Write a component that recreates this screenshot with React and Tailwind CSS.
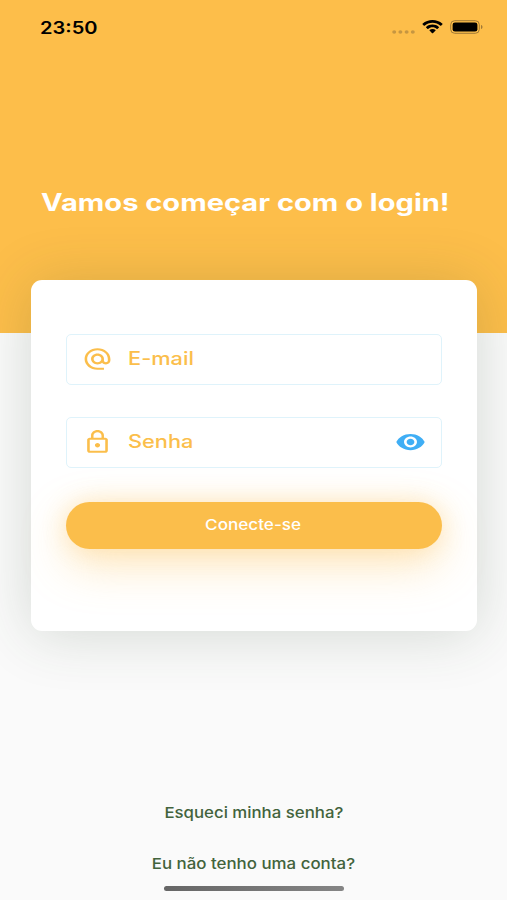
import React from "react";
import { MdAlternateEmail, MdLockOutline, MdRemoveRedEye } from "react-icons/md";

function StatusBar() {
  return (
    <div className="flex h-[54px] items-center justify-between pl-[40px] pr-[24px]">
      <span className="mt-[2px] origin-left scale-x-[1.18] text-[17px] font-semibold leading-none text-black">
        23:50
      </span>
      <div className="flex items-center">
        <svg className="mt-[9px] mr-[7px] h-1 w-[23px]" viewBox="0 0 23 4" fill="#c69641">
          <ellipse cx="2.2" cy="2" rx="2" ry="1.7" />
          <ellipse cx="8.4" cy="2" rx="2" ry="1.7" />
          <ellipse cx="14.6" cy="2" rx="2" ry="1.7" />
          <ellipse cx="20.8" cy="2" rx="2" ry="1.7" />
        </svg>
        <svg
          className="mr-[7px] h-[14px] w-[21px]"
          viewBox="0 0 17 12"
          preserveAspectRatio="none"
          fill="#000"
        >
          <path d="M8.5 2.4c2.4 0 4.7.9 6.4 2.5.1.1.3.1.5 0l1.2-1.2c.1-.2.1-.4 0-.5C12.1-1 4.9-1 .4 3.2c-.1.1-.1.3 0 .5l1.2 1.2c.2.1.4.1.5 0C3.8 3.3 6.1 2.4 8.5 2.4z" />
          <path d="M8.5 6.3c1.3 0 2.6.5 3.5 1.4.2.1.4.1.5 0l1.2-1.3c.2-.1.2-.4 0-.5-2.9-2.7-7.5-2.7-10.4 0-.2.1-.2.4 0 .5l1.2 1.3c.1.1.3.1.5 0 .9-.9 2.2-1.4 3.5-1.4z" />
          <path d="M11 9.1c.1-.1.1-.4 0-.5-1.4-1.2-3.5-1.2-4.9 0-.2.1-.2.4 0 .5l2.1 2.2c.2.1.4.1.6 0z" />
        </svg>
        <svg className="h-[14px] w-[33px]" viewBox="0 0 33 14" fill="none">
          <rect x="0.7" y="0.7" width="28.6" height="12.6" rx="4" stroke="#a17a36" strokeWidth="1" />
          <rect x="2.6" y="2.4" width="24.8" height="9.2" rx="2.4" fill="#000" />
          <path d="M31 5v4c1-.4 1.5-1.2 1.5-2s-.5-1.6-1.5-2z" fill="#a17a36" />
        </svg>
      </div>
    </div>
  );
}

function Field({ icon: Icon, label, children }) {
  return (
    <div className="flex h-[51px] items-center rounded-[5px] border border-[#dff3fb] pl-[15px] pr-[15px]">
      <Icon preserveAspectRatio="none" className="h-[26px] w-[31px] text-[#fbbe4b]" />
      <span className="-mt-px ml-[15px] origin-left scale-x-[1.21] text-[18px] font-medium leading-none text-[#fbbe4b]">
        {label}
      </span>
      {children}
    </div>
  );
}

function App() {
  return (
    <div className="flex h-[900px] w-[507px] flex-col overflow-hidden bg-[#fafafa] font-['Inter',sans-serif]">
      <header className="h-[333px] shrink-0 bg-[#fdbe4a]">
        <StatusBar />
        <h1 className="ml-[41px] mt-[134px] w-max origin-left scale-x-[1.21] text-[24px] font-bold leading-[30px] text-white">
          Vamos começar com o login!
        </h1>
      </header>

      <main className="ml-[31px] mr-[30px] -mt-[53px] h-[351px] shrink-0 rounded-[11px] bg-white px-[35px] pt-[53.5px] shadow-[0_3px_58px_rgba(46,74,50,0.19)]">
        <Field icon={MdAlternateEmail} label="E-mail" />
        <div className="mt-[32px]">
          <Field icon={MdLockOutline} label="Senha">
            <MdRemoveRedEye
              preserveAspectRatio="none"
              className="ml-auto h-[26px] w-[31px] text-[#3faef5]"
            />
          </Field>
        </div>
        <button className="mt-[34px] flex h-[47px] w-full items-center justify-center rounded-full bg-[#fbbe4b] shadow-[0_0_24px_rgba(251,190,75,0.3),0_16px_46px_rgba(251,190,75,0.35)]">
          <span className="-mt-px -ml-px scale-x-[1.14] text-[15px] font-medium leading-none text-white">
            Conecte-se
          </span>
        </button>
      </main>

      <footer className="mt-auto flex flex-col items-center text-[15px] font-medium leading-[20px] text-[#42633c]">
        <a className="scale-x-[1.12]">Esqueci minha senha?</a>
        <a className="mt-[31px] scale-x-[1.125]">Eu não tenho uma conta?</a>
        <div className="mb-[9px] mt-[12px] h-[5px] w-[180px] rounded-full bg-linear-to-r from-[#666] to-[#858585]" />
      </footer>
    </div>
  );
}

export default App;
